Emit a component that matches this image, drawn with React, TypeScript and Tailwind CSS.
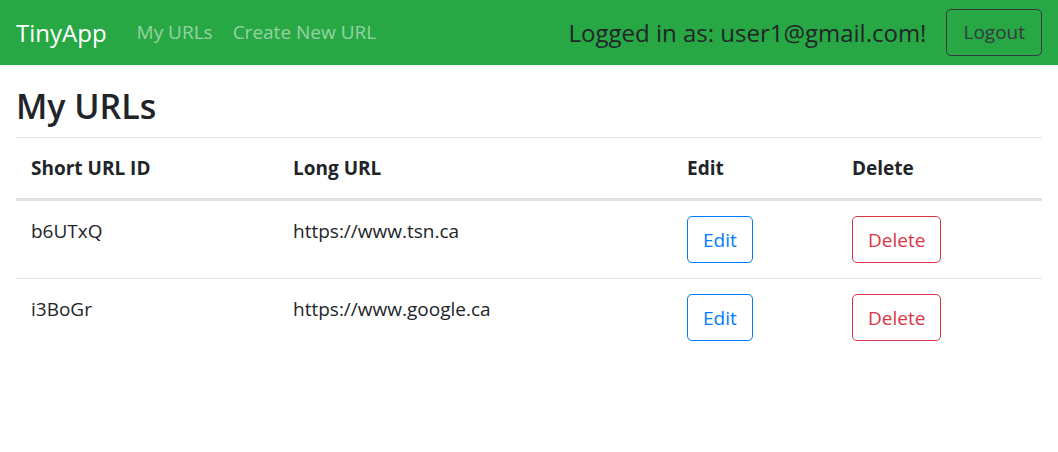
import React from 'react';

const rows = [
	{ id: 'b6UTxQ', url: 'https://www.tsn.ca' },
	{ id: 'i3BoGr', url: 'https://www.google.ca' },
];

function Row({ id, url }: { id: string; url: string }) {
	return (
		<div className="grid grid-cols-[262px_394px_165px_1fr] border-t border-[#dee2e6]">
			<div className="px-[15px] py-[15px] leading-[30px]">{id}</div>
			<div className="px-[15px] py-[15px] leading-[30px]">{url}</div>
			<div className="px-[15px] py-[15px]">
				<button className="h-[47px] px-[15px] border border-[#007bff] text-[#007bff] rounded-[5px] leading-[30px]">
					Edit
				</button>
			</div>
			<div className="px-[15px] py-[15px]">
				<button className="h-[47px] px-[15px] border border-[#dc3545] text-[#dc3545] rounded-[5px] leading-[30px]">
					Delete
				</button>
			</div>
		</div>
	);
}

export default function App() {
	return (
		<div className="min-h-[452px] bg-white text-[#212529] text-[19px] font-['Open_Sans',sans-serif]">
			{/* Navbar */}
			<nav className="h-[65px] bg-[#28a745] flex items-center px-4">
				<span className="text-[24px] text-white mr-[20px]">TinyApp</span>
				<a className="px-[10px] text-white/50">My URLs</a>
				<a className="px-[10px] text-white/50">Create New URL</a>
				<span className="ml-auto text-[24px] text-[#212529]">Logged in as: user1@gmail.com!</span>
				<button className="ml-[20px] h-[47px] px-[16px] border border-[#343a40] text-[#343a40] rounded-[5px]">
					Logout
				</button>
			</nav>

			<div className="px-4 pt-[17px]">
				<h2 className="text-[34px] font-semibold leading-[48px] mb-[7px]">My URLs</h2>

				{/* Table */}
				<div className="border-t border-[#dee2e6]">
					<div className="grid grid-cols-[262px_394px_165px_1fr] border-b-2 border-[#dee2e6] font-bold">
						<div className="px-[15px] py-[15px] leading-[30px]">Short URL ID</div>
						<div className="px-[15px] py-[15px] leading-[30px]">Long URL</div>
						<div className="px-[15px] py-[15px] leading-[30px]">Edit</div>
						<div className="px-[15px] py-[15px] leading-[30px]">Delete</div>
					</div>
					{rows.map((r) => (
						<Row key={r.id} id={r.id} url={r.url} />
					))}
				</div>
			</div>
		</div>
	);
}
